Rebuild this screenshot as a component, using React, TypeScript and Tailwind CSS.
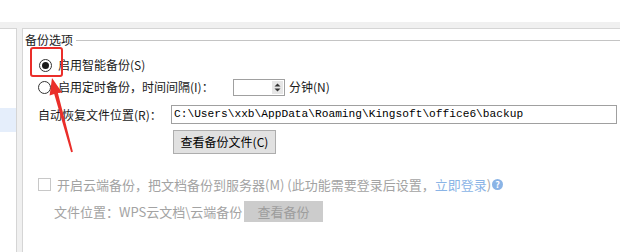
import React from "react";

const cjk = { fontFamily: '"Noto Sans CJK SC", "Noto Sans", sans-serif' };

function Radio({ checked }: { checked?: boolean }) {
  return (
    <span className="relative flex h-[13px] w-[13px] shrink-0 items-center justify-center rounded-full border border-[#333333] bg-white">
      {checked && <span className="h-[7px] w-[7px] rounded-full bg-[#1a1a1a]" />}
    </span>
  );
}

export default function App() {
  return (
    <div
      className="relative h-[252px] w-[620px] overflow-hidden bg-white text-[12px] text-[#1a1a1a]"
      style={cjk}
    >
      <div className="h-[22px] bg-white" />
      <div className="flex h-[230px] bg-[#f0f0f0] pt-[6px]">
        {/* left list panel */}
        <div className="w-[17px] shrink-0 border-r border-t border-[#d5d5d5] bg-white">
          <div className="mt-[79px] h-[24px] bg-[#e5eefb]" />
        </div>
        {/* main panel */}
        <div className="ml-[5px] flex-1 border-l border-t border-[#d5d5d5] bg-white">
          {/* group title */}
          <div className="mt-[4px] flex h-[14px] items-center pl-[2px]">
            <span className="leading-none">备份选项</span>
            <span className="ml-[3px] h-px flex-1 bg-[#c4c4c4]" />
          </div>
          {/* radio 1 */}
          <div className="mt-[8px] flex h-[20px] items-center pl-[16px]">
            <Radio checked />
            <span className="ml-[6px] leading-none">启用智能备份(S)</span>
          </div>
          {/* radio 2 */}
          <div className="mt-[2px] flex h-[20px] items-center pl-[15px]">
            <Radio />
            <span className="ml-[7px] w-[175px] leading-none">启用定时备份，时间间隔(I)：</span>
            <span className="flex h-[17px] w-[52px] items-center justify-end border border-[#a0a0a0] bg-white pr-[1px]">
              <span className="flex h-[13px] w-[11px] flex-col items-center justify-center gap-[1px] bg-[#e6e6e6]">
                <svg width="7" height="4" viewBox="0 0 7 4">
                  <path d="M0.5 3.5 L3.5 0.5 L6.5 3.5 Z" fill="#333" />
                </svg>
                <svg width="7" height="4" viewBox="0 0 7 4">
                  <path d="M0.5 0.5 L3.5 3.5 L6.5 0.5 Z" fill="#333" />
                </svg>
              </span>
            </span>
            <span className="ml-[4px] leading-none">分钟(N)</span>
          </div>
          {/* path row */}
          <div className="mt-[8px] flex h-[19px] items-center pl-[15px] pr-[3px]">
            <span className="w-[133px] shrink-0 leading-none">自动恢复文件位置(R)：</span>
            <span className="flex h-[19px] flex-1 items-center border border-[#a0a0a0] bg-white pl-[2px]">
              <span
                className="text-[11.2px] leading-none text-black"
                style={{ fontFamily: '"Liberation Mono", monospace' }}
              >
                C:\Users\xxb\AppData\Roaming\Kingsoft\office6\backup
              </span>
            </span>
          </div>
          {/* view button */}
          <div className="mt-[6px] pl-[150px]">
            <button className="flex h-[24px] w-[103px] items-center justify-center border border-[#adadad] bg-[#e1e1e1] text-[12px] leading-none text-black">
              查看备份文件(C)
            </button>
          </div>
          {/* cloud backup */}
          <div className="mt-[20px] flex h-[20px] items-center pl-[15px] text-[13px] text-[#a3a3a3]">
            <span className="h-[13px] w-[13px] shrink-0 border border-[#c8c8c8] bg-white" />
            <span className="ml-[6px] leading-none">
              开启云端备份，把文档备份到服务器(M) (此功能需要登录后设置，
              <span className="text-[#8ab4e6]">立即登录</span>)
            </span>
            <span className="ml-[1px] flex h-[11px] w-[11px] items-center justify-center rounded-full bg-[#8ab4e6] text-[9px] font-bold leading-none text-white">
              ?
            </span>
          </div>
          <div className="mt-[7px] flex h-[21px] items-center pl-[31px] text-[13px] text-[#a3a3a3]">
            <span className="w-[190px] shrink-0 leading-none">文件位置：WPS云文档\云端备份</span>
            <span className="flex h-[21px] w-[79px] items-center justify-center bg-[#cccccc] leading-none text-[#9d9d9d]">
              查看备份
            </span>
          </div>
        </div>
      </div>

      {/* annotation overlay */}
      <div className="pointer-events-none absolute left-[30px] top-[47px] h-[30px] w-[33px] rounded-[3px] border-[2.5px] border-[#ea2e2a]" />
      <svg
        className="pointer-events-none absolute left-0 top-0"
        width="620"
        height="252"
        viewBox="0 0 620 252"
      >
        <polygon
          points="52,78 62,92.5 57.9,93 72.9,151.8 71.1,152.2 54.2,94 49.6,95.5"
          fill="#ea2e2a"
        />
      </svg>
    </div>
  );
}
